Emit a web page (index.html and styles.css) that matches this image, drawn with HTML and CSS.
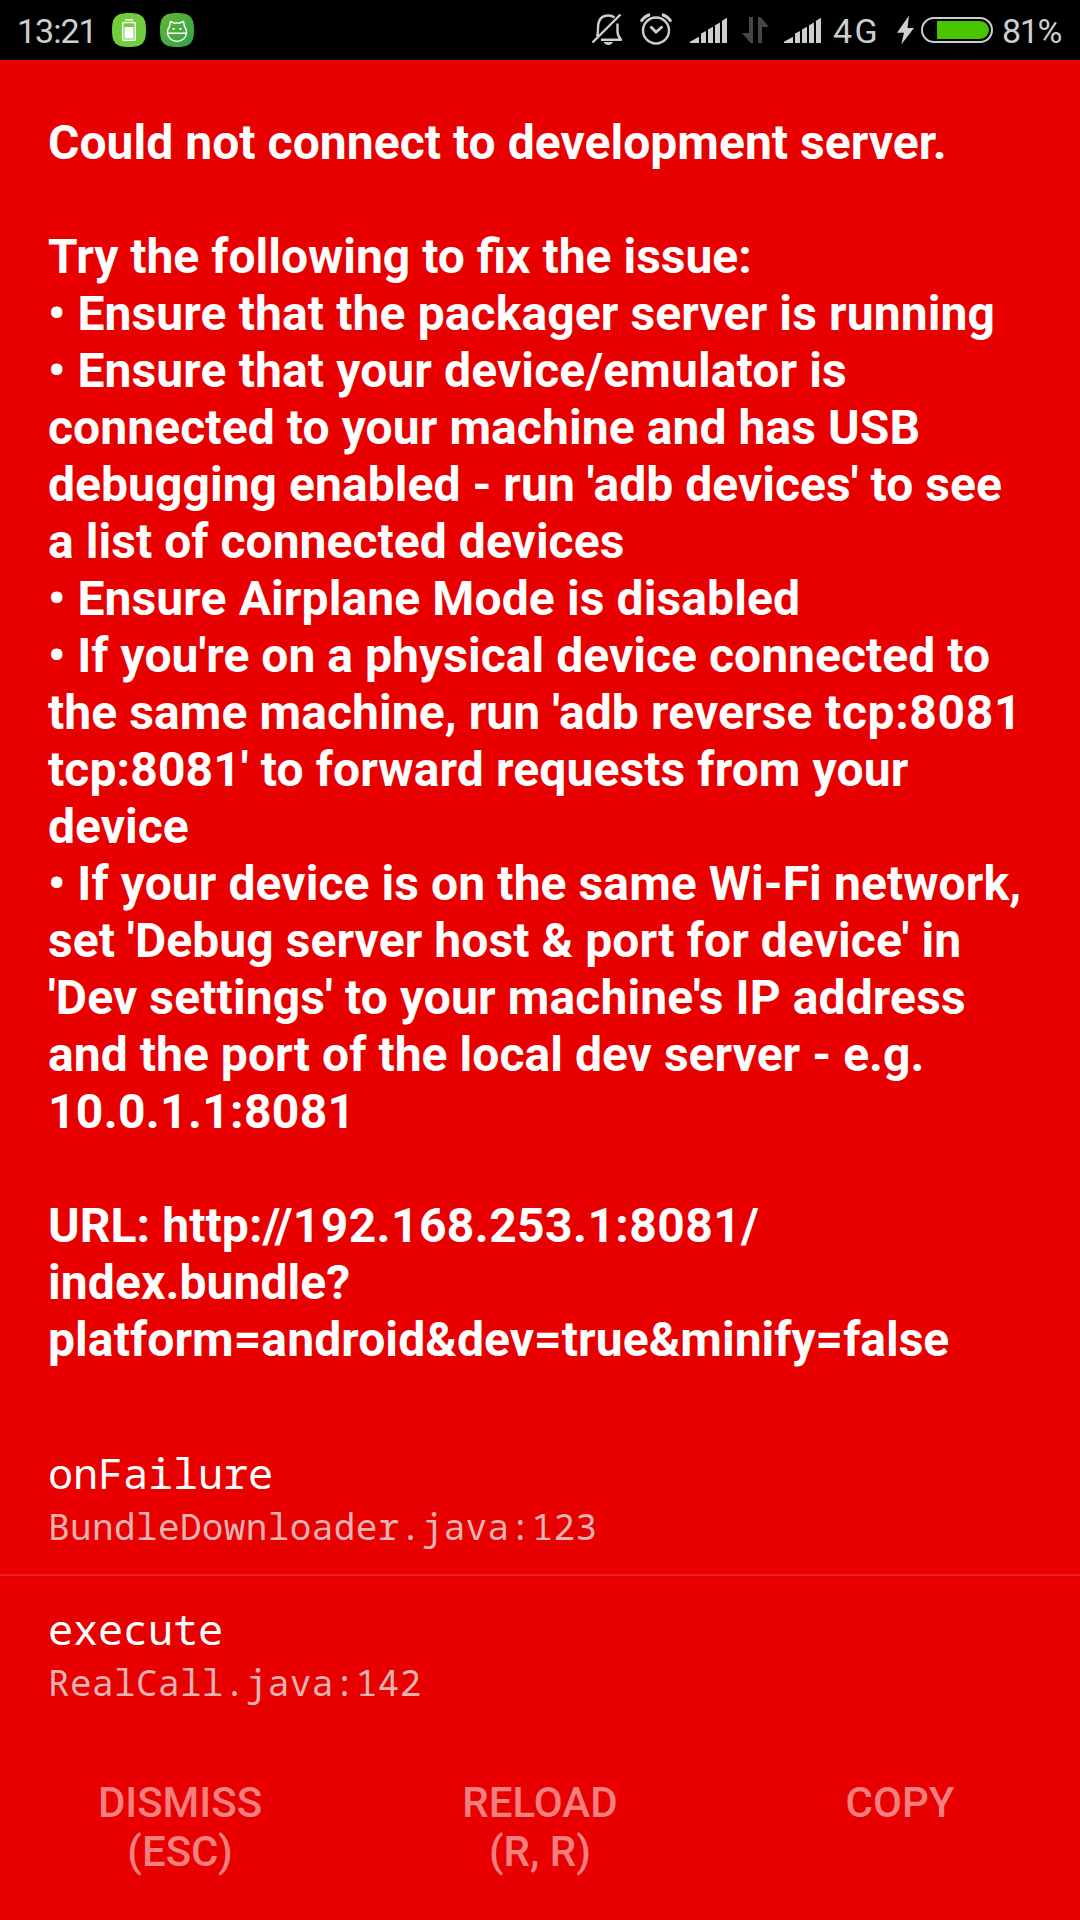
FILE: index.html
```html
<!DOCTYPE html>
<html lang="en">
<head>
<meta charset="utf-8">
<title>Redbox</title>
<link rel="stylesheet" href="styles.css">
</head>
<body>
<header class="status">
  <span class="clock">13:21</span>
  <svg class="left-icons" width="90" height="60" viewBox="0 0 90 60">
    <defs><linearGradient id="g" x1="0" y1="0" x2="1" y2="1"><stop offset="0" stop-color="#68b536"/><stop offset="1" stop-color="#2fa447"/></linearGradient></defs>
    <path fill="#72cd3c" d="M17 13c13 0 17 4 17 17s-4 17-17 17S0 43 0 30s4-17 17-17z"/>
    <path fill="#fff" d="M13 19h8v1.500h-8zM12.500 27h9v11.500h-9z"/>
    <rect x="10.700" y="22.500" width="12.600" height="17.800" rx="1" fill="none" stroke="#fff" stroke-width="1.500"/>
    <path fill="url(#g)" d="M65 13c13 0 17 4 17 17s-4 17-17 17-17-4-17-17 4-17 17-17z"/>
    <path fill="none" stroke="#fff" stroke-width="1.400" stroke-linejoin="round" d="M57.500 26.500l1-5 4 1.700q2.500-.6 5 0l4-1.700 1 5q2 2.500 2 6a9.500 9 0 0 1-19 0q0-3.500 2-6zM56 33.300h18"/>
    <path fill="#fff" d="M60.500 28h2.200v1.800h-2.200zM67.300 28h2.200v1.800h-2.200z"/>
  </svg>
  <svg class="signals" width="232" height="60" viewBox="590 0 232 60">
    <g fill="none" stroke="#cecece" stroke-width="2.400">
      <path d="M592.500 42.500L620.500 14.500M597 36.500c1-2 1-4 1-8.500 0-9 4-12.500 10.500-12.500 2.500 0 4.500.7 6 2M617.500 23.500v8q0 4 3.500 8.300h-20" stroke-linejoin="round"/>
      <circle cx="656" cy="30.500" r="13"/>
      <path d="M650.500 26.500l5.500 5.500 6.500-5.500" stroke-width="2.800"/>
      <path d="M641 21.500q3-4.800 9-7M671 21.500q-3-4.800-9-7" stroke-width="3"/>
    </g>
    <path fill="#cecece" d="M603.500 42h9.500q-1.500 3-4.700 3t-4.800-3z"/>
    <path id="bars" fill="#cecece" d="M690 43v-1.200l9-5V43zM701 43V33.500l5-2.500v12zM708 43V29.500l5-2.800V43zM715 43V25.300l5-2.800V43zM722 43V20.800l5-3V43z"/>
    <use href="#bars" x="94"/>
    <path fill="#464646" d="M749 17h4v26h-2.500L742 33h7zM758 17h2.500l8.500 10h-7v16h-4z"/>
  </svg>
  <span class="net">4G</span>
  <svg class="battery" width="98" height="60" viewBox="896 0 98 60">
    <path fill="#cecece" d="M909 15.500l-12 17.300h7l-2.700 11.700L914 28h-6.500z"/>
    <rect x="922" y="18" width="70" height="24" rx="12" fill="none" stroke="#cecece" stroke-width="2"/>
    <path fill="#49c400" d="M937 21h43a9 9 0 0 1 0 18h-43z"/>
  </svg>
  <span class="pct">81%</span>
</header>
<main>
<p class="message"><span class="t1">Could not connect to development server.</span>

Try the following to fix the issue:
<span class="t3">• Ensure that the packager server is running
• Ensure that your device/emulator is</span>
<span class="t2">connected to your machine and has USB</span>
<span class="t1">debugging enabled - run 'adb devices' to see
a list of connected devices</span>
<span class="t3">• Ensure Airplane Mode is disabled</span>
<span class="t1">• If you're on a physical device connected to</span>
<span class="t2">the same machine, run 'adb reverse</span><span class="t6"> tcp:8081</span>
<span class="t3">tcp:8081' to forward requests from your</span>
device
<span class="t2">• If your device is on the same Wi-Fi network,
set 'Debug server host &amp; port for device' in</span>
<span class="t3">'Dev settings' to your machine's IP address</span>
<span class="t1">and the port of the local dev server - e.g.</span>
<span class="t5">10.0.1.1:8081</span>

<span class="t2">URL: http://</span><span class="t4">192.168.253.1:8081/</span>
<span class="t2">index.bundle?
platform=android&amp;dev=true&amp;</span>minify=false</p>
<div class="frame"><div class="method">onFailure</div><div class="file">BundleDownloader.java:123</div></div>
<div class="frame"><div class="method">execute</div><div class="file">RealCall.java:142</div></div>
</main>
<footer class="actions">
  <div class="action">DISMISS<br>(ESC)</div>
  <div class="action">RELOAD<br>(R, R)</div>
  <div class="action">COPY</div>
</footer>
</body>
</html>
```
FILE: styles.css
```css
body { margin: 0; width: 1080px; height: 1920px; overflow: hidden; background: #e80000; color: #fff; font-family: Roboto, sans-serif; display: flex; flex-direction: column; }
.status { box-sizing: border-box; height: 60px; flex: none; background: #000; color: #cecece; display: flex; font-size: 34px; line-height: 62px; padding-left: 17px; white-space: nowrap; }
.status svg { flex: none; display: block; }
.clock { width: 95px; flex: none; letter-spacing: -1px; }
.left-icons { margin-right: 388px; }
.net { width: 62px; margin-left: 11px; flex: none; letter-spacing: 2.5px; }
.battery { margin-left: 1px; }
.pct { margin-left: 8px; letter-spacing: -1.4px; }
.message { margin: 0; padding: 54px 0 0 48px; height: 1314px; box-sizing: border-box; font-size: 48px; font-weight: 700; line-height: 57px; white-space: pre; }
.t1 { letter-spacing: 0.040px; }
.t2 { letter-spacing: 0.085px; }
.t3 { letter-spacing: 0.115px; }
.t4 { letter-spacing: 0.420px; }
.t5 { letter-spacing: 0.330px; }
.t6 { letter-spacing: 0.650px; }
.frame { height: 156px; box-sizing: border-box; padding: 26px 48px 0; font-family: "Droid Sans Mono", "Noto Sans Mono", "Liberation Mono", monospace; white-space: nowrap; }
.frame:first-of-type { margin-top: 46px; border-bottom: 2px solid #ec1f1f; }
.method { font-size: 42px; line-height: 54px; letter-spacing: -0.200px; }
.file { font-size: 36px; line-height: 54px; letter-spacing: 0.380px; color: #e8b2b2; }
.actions { display: flex; margin-top: 46px; }
.action { flex: 1; text-align: center; font-size: 42px; font-weight: 500; line-height: 49px; color: #f47f7f; }
```
